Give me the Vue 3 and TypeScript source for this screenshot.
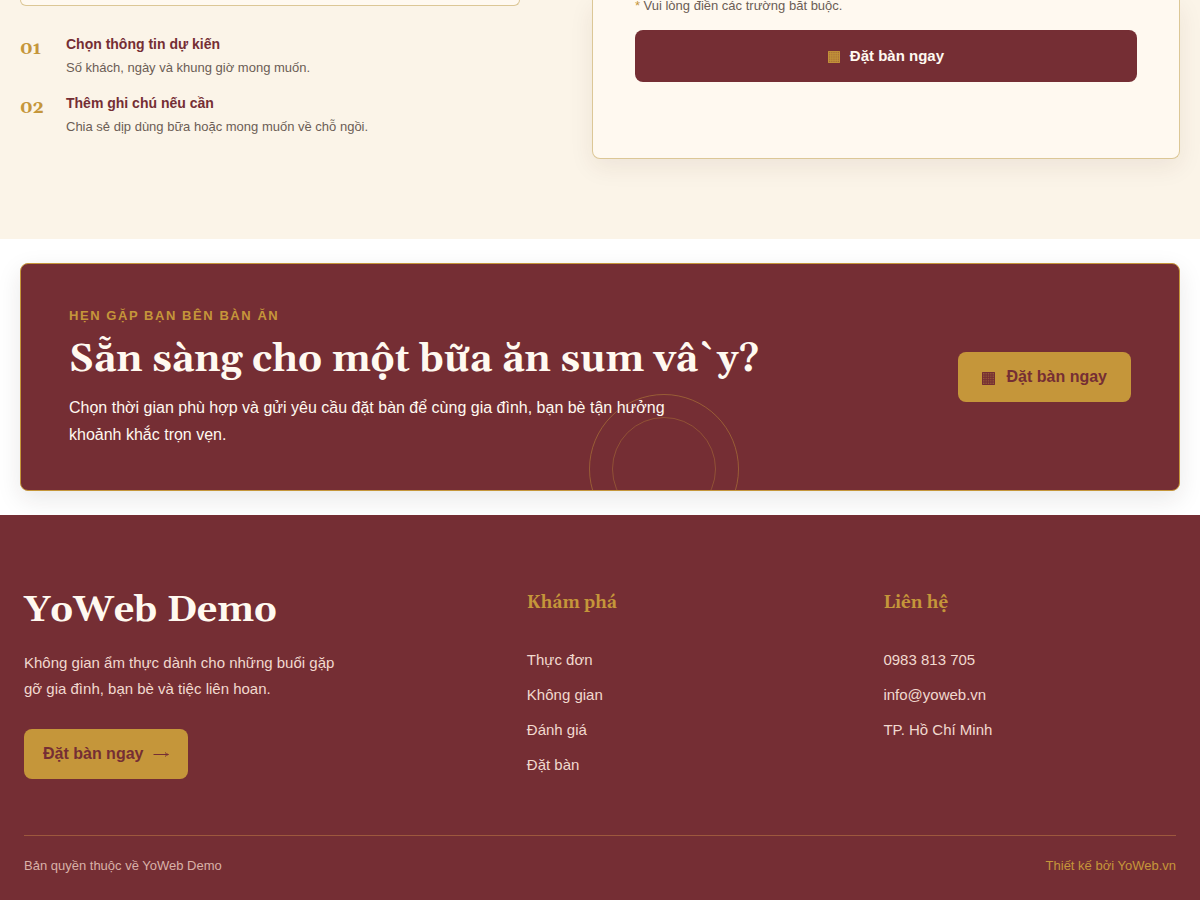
<script setup lang="ts">
interface Step {
  number: string
  title: string
  text: string
}

interface FooterLink {
  label: string
  href: string
}

const steps: Step[] = [
  { number: '01', title: 'Chọn thông tin dự kiến', text: 'Số khách, ngày và khung giờ mong muốn.' },
  { number: '02', title: 'Thêm ghi chú nếu cần', text: 'Chia sẻ dịp dùng bữa hoặc mong muốn về chỗ ngồi.' },
]

const exploreLinks: FooterLink[] = [
  { label: 'Thực đơn', href: '#thuc-don' },
  { label: 'Không gian', href: '#khong-gian' },
  { label: 'Đánh giá', href: '#danh-gia' },
  { label: 'Đặt bàn', href: '#dat-ban' },
]

const contactLinks: FooterLink[] = [
  { label: '0983 813 705', href: 'tel:0983813705' },
  { label: 'info@yoweb.vn', href: 'mailto:info@yoweb.vn' },
]

// Small square calendar grid: an outline with four inner rules each way.
const gridPath =
  'M.5 .5H12.5V12.5H.5ZM3 .5V12.5M5.3 .5V12.5M7.7 .5V12.5M10 .5V12.5M.5 3H12.5M.5 5.3H12.5M.5 7.7H12.5M.5 10H12.5'
</script>

<template>
  <div class="page">
    <section id="dat-ban" class="booking">
      <div class="booking-intro">
        <div class="intro-frame"></div>
        <ol class="steps">
          <li v-for="step in steps" :key="step.number" class="step">
            <span class="step-number">{{ step.number }}</span>
            <div>
              <strong class="step-title">{{ step.title }}</strong>
              <p class="step-text">{{ step.text }}</p>
            </div>
          </li>
        </ol>
      </div>
      <form class="booking-card" @submit.prevent>
        <p class="required-note"><span class="star">*</span> Vui lòng điền các trường bắt buộc.</p>
        <button type="submit" class="submit">
          <svg class="grid-icon submit-icon" viewBox="0 0 13 13" aria-hidden="true">
            <rect width="13" height="13" />
            <path :d="gridPath" />
          </svg>
          <span>Đặt bàn ngay</span>
        </button>
      </form>
    </section>

    <section class="cta-wrap">
      <div class="cta">
        <div class="rings" aria-hidden="true"></div>
        <div class="cta-copy">
          <p class="eyebrow">HẸN GẶP BẠN BÊN BÀN ĂN</p>
          <h2 class="cta-title">Sẵn sàng cho một bữa ăn sum vâ`y?</h2>
          <p class="cta-text">Chọn thời gian phù hợp và gửi yêu cầu đặt bàn để cùng gia đình, bạn bè tận hưởng khoảnh khắc trọn vẹn.</p>
        </div>
        <a class="gold-button cta-button" href="#dat-ban">
          <svg class="grid-icon" viewBox="0 0 13 13" aria-hidden="true">
            <rect width="13" height="13" />
            <path :d="gridPath" />
          </svg>
          <span>Đặt bàn ngay</span>
        </a>
      </div>
    </section>

    <footer class="footer">
      <div class="footer-grid">
        <div>
          <h2 class="brand">YoWeb Demo</h2>
          <p class="brand-text">Không gian ẩm thực dành cho những buổi gặp gỡ gia đình, bạn bè và tiệc liên hoan.</p>
          <a class="gold-button footer-button" href="#dat-ban">
            <span>Đặt bàn ngay</span>
            <svg class="arrow" viewBox="0 0 16 10" aria-hidden="true">
              <path d="M.5 5.5H15M12 3.5Q13 5 15.5 5.5Q13 6 12 7.5" />
            </svg>
          </a>
        </div>
        <nav aria-labelledby="explore-title">
          <h3 id="explore-title" class="column-title">Khám phá</h3>
          <ul class="links">
            <li v-for="link in exploreLinks" :key="link.href"><a :href="link.href">{{ link.label }}</a></li>
          </ul>
        </nav>
        <div>
          <h3 class="column-title">Liên hệ</h3>
          <ul class="links">
            <li v-for="link in contactLinks" :key="link.href"><a :href="link.href">{{ link.label }}</a></li>
            <li>TP. Hồ Chí Minh</li>
          </ul>
        </div>
      </div>
      <div class="footer-bottom">
        <span>Bản quyền thuộc về YoWeb Demo</span>
        <a class="credit" href="#yoweb">Thiết kế bởi YoWeb.vn</a>
      </div>
    </footer>
  </div>
</template>

<style>
body {
  margin: 0;
  background: #fff;
}
</style>

<style scoped>
.page {
  --wine: #752e34;
  --gold: #c5963a;
  --cream: #fff9f0;
  --serif: Georgia, Gelasio, "Liberation Serif", serif;
  font-family: "Liberation Sans", Arial, sans-serif;
  font-size: 16px;
  color: #6b5d55;
}

h2,
h3,
p,
ul,
ol {
  margin: 0;
  padding: 0;
}

ul,
ol {
  list-style: none;
}

a {
  color: inherit;
  text-decoration: none;
}

.booking {
  display: grid;
  grid-template-columns: 0.85fr 1fr;
  gap: 72px;
  padding: 0 20px 80px;
  background: #fbf4e8;
}

.intro-frame {
  height: 5px;
  border: 1px solid #dcc796;
  border-top: 0;
  border-radius: 0 0 8px 8px;
  background: var(--cream);
}

.steps {
  display: grid;
  gap: 12px;
  padding-top: 26px;
}

.step {
  display: grid;
  grid-template-columns: 30px 1fr;
  gap: 16px;
}

.step-number {
  font: 700 18px/34px var(--serif);
  color: var(--gold);
}

.step-title {
  display: block;
  font-size: 14px;
  line-height: 24px;
  color: var(--wine);
}

.step-text {
  font-size: 13px;
  line-height: 23px;
}

.booking-card {
  padding: 0 42px 76px;
  border: 1px solid #dcc796;
  border-top: 0;
  border-radius: 0 0 8px 8px;
  background: var(--cream);
  box-shadow: 0 8px 24px rgba(75, 35, 30, 0.08);
}

.required-note {
  margin-bottom: 19px;
  font-size: 13px;
  line-height: 11px;
}

.star {
  color: var(--gold);
}

.submit {
  display: flex;
  justify-content: center;
  align-items: center;
  gap: 10px;
  width: 100%;
  height: 52px;
  border: 0;
  border-radius: 8px;
  background: var(--wine);
  color: var(--cream);
  font: 700 15px/24px "Liberation Sans", Arial, sans-serif;
  cursor: pointer;
}

.grid-icon {
  width: 13px;
  height: 13px;
  margin-top: 2px;
}

.grid-icon rect {
  fill: currentColor;
  fill-opacity: 0.6;
}

.grid-icon path {
  fill: none;
  stroke: currentColor;
  stroke-width: 1;
}

.submit-icon {
  width: 12px;
  height: 12px;
  color: var(--gold);
}

.cta-wrap {
  padding: 24px 20px;
  background: #fff;
}

.cta {
  position: relative;
  display: flex;
  justify-content: space-between;
  align-items: center;
  gap: 40px;
  padding: 42px 48px;
  overflow: hidden;
  border: 1px solid var(--gold);
  border-radius: 8px;
  background: var(--wine);
  box-shadow: 0 8px 24px rgba(40, 30, 30, 0.1);
  color: var(--cream);
}

.rings {
  position: absolute;
  right: 38%;
  bottom: -54px;
  box-sizing: border-box;
  width: 150px;
  height: 150px;
  border: 1px solid rgba(197, 150, 58, 0.45);
  border-radius: 50%;
}

.rings::after {
  content: "";
  position: absolute;
  inset: 22px;
  border: 1px solid rgba(197, 150, 58, 0.35);
  border-radius: 50%;
}

.cta-copy {
  position: relative;
}

.eyebrow {
  font-size: 13px;
  font-weight: 700;
  line-height: 20px;
  letter-spacing: 0.12em;
  color: var(--gold);
}

.cta-title {
  margin: 10px 0;
  font: 700 38px/48px var(--serif);
}

.cta-text {
  max-width: 620px;
  line-height: 27px;
}

.gold-button {
  display: inline-flex;
  align-items: center;
  gap: 10px;
  height: 50px;
  border-radius: 8px;
  background: var(--gold);
  color: var(--wine);
  font-weight: 700;
  white-space: nowrap;
}

.cta-button {
  gap: 12px;
  padding: 0 24px;
}

.footer {
  padding: 72px 24px 24px;
  background: var(--wine);
  color: #f1d9cf;
}

.footer-grid {
  display: grid;
  grid-template-columns: 1.5fr 1fr 1fr;
  gap: 64px;
  padding-bottom: 56px;
  font-size: 15px;
}

.brand {
  font: 700 36px/48px var(--serif);
  color: var(--cream);
}

.brand-text {
  max-width: 330px;
  margin: 15px 0 27px;
  line-height: 26px;
}

.footer-button {
  padding: 0 19px;
  font-size: 16px;
}

.arrow {
  width: 16px;
  height: 10px;
  fill: none;
  stroke: currentColor;
  stroke-width: 1;
}

.column-title {
  margin-bottom: 28px;
  font: 700 17px/32px var(--serif);
  color: var(--gold);
}

.links {
  display: grid;
  gap: 10px;
  line-height: 25px;
}

.footer-bottom {
  display: flex;
  justify-content: space-between;
  padding-top: 20px;
  border-top: 1px solid rgba(197, 130, 70, 0.5);
  font-size: 13px;
  line-height: 20px;
  color: #d9b1a8;
}

.credit {
  color: var(--gold);
}
</style>
